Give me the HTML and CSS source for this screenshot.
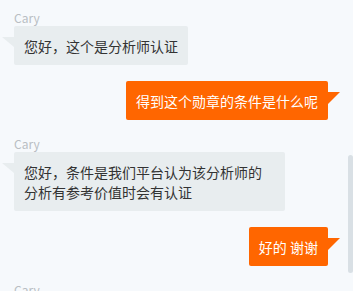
FILE: index.html
```html
<!DOCTYPE html>
<html lang="zh-CN">
<head>
  <meta charset="UTF-8">
  <title>消息</title>
  <meta name="viewport" content="width=device-width, initial-scale=1.0">
  <link rel="stylesheet" href="styles.css">
</head>
<body>
  <div class="chat">
    <div class="msg msg-left">
      <div class="msg-name">Cary</div>
      <div class="bubble">您好，这个是分析师认证</div>
    </div>

    <div class="msg msg-right">
      <div class="bubble">得到这个勋章的条件是什么呢</div>
    </div>

    <div class="msg msg-left">
      <div class="msg-name">Cary</div>
      <div class="bubble">您好，条件是我们平台认为该分析师的分析有参考价值时会有认证</div>
    </div>

    <div class="msg msg-right">
      <div class="bubble">好的 谢谢</div>
    </div>

    <div class="msg msg-left">
      <div class="msg-name">Cary</div>
    </div>
  </div>

  <div class="scroll-thumb"></div>
</body>
</html>
```

FILE: styles.css
```css
body {
  margin: 0;
  padding: 0;
  background: #f6f9fc;
  font-family: "Noto Sans CJK SC", "Noto Sans", sans-serif;
  height: 291px;
  overflow: hidden;
  position: relative;
}
.chat {
  display: flex;
  flex-direction: column;
  gap: 16px;
  padding: 10px 25px 0 14px;
}
.msg {
  display: flex;
  flex-direction: column;
}
.msg-left {
  align-items: flex-start;
}
.msg-right {
  align-items: flex-end;
}
.msg-name {
  font-size: 12px;
  line-height: 16px;
  color: #b9bec3;
}
.bubble {
  position: relative;
  max-width: 251px;
  padding: 10px 10px 9px;
  font-size: 14px;
  line-height: 20px;
  border-radius: 2px;
}
.msg-left .bubble {
  background: #e8edef;
  color: #333;
}
.msg-right .bubble {
  background: #ff6600;
  color: #fff;
}
.bubble::before {
  content: "";
  position: absolute;
  top: 11px;
  width: 0;
  height: 0;
}
.msg-left .bubble::before {
  left: -12px;
  border-top: 10px solid #e8edef;
  border-left: 12px solid transparent;
}
.msg-right .bubble::before {
  right: -12px;
  border-top: 12px solid #ff6600;
  border-right: 12px solid transparent;
}
.scroll-thumb {
  position: absolute;
  left: 348px;
  top: 155px;
  width: 5px;
  height: 118px;
  background: #d9e0e5;
  border-radius: 3px;
}
```
